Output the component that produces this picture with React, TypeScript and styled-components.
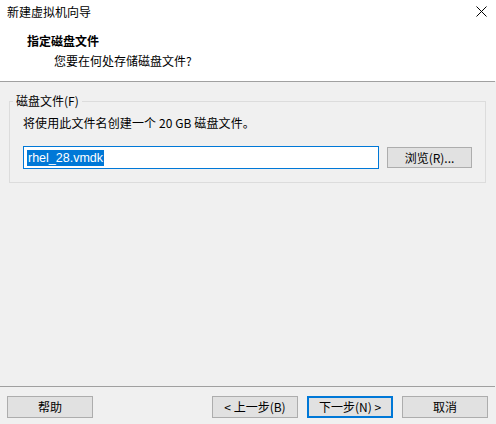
import React from 'react'
import styled, { createGlobalStyle } from 'styled-components'

const GlobalStyle = createGlobalStyle`
  html, body {
    margin: 0;
    padding: 0;
    background: #f0f0f0;
  }
  body {
    font-family: "Noto Sans CJK SC", "Microsoft YaHei UI", sans-serif;
    font-size: 12px;
    color: #000;
  }
`

const Window = styled.div`
  width: 496px;
  height: 424px;
  display: flex;
  flex-direction: column;
  background: #f0f0f0;
  overflow: hidden;
`

const Header = styled.div`
  height: 81px;
  background: #fff;
  display: flex;
  flex-direction: column;
`

const TitleBar = styled.div`
  height: 24px;
  display: flex;
  align-items: center;
  justify-content: space-between;
  padding: 0 9px 0 7px;
  font-size: 12px;
  line-height: 16px;
`

const CloseButton = styled.div`
  width: 12px;
  height: 12px;
  display: flex;
  align-items: center;
  justify-content: center;
  margin-top: -2px;
`

const Heading = styled.div`
  margin-top: 9px;
  padding-left: 27px;
  font-size: 12px;
  line-height: 16px;
  font-weight: 700;
`

const SubHeading = styled.div`
  margin-top: 4px;
  padding-left: 54px;
  font-size: 12px;
  line-height: 16px;
`

const Divider = styled.div`
  height: 1px;
  background: #a0a0a0;
  margin-right: 1px;
`

const Body = styled.div`
  flex: 1;
  padding: 11px 10px 0 9px;
`

const GroupBox = styled.fieldset`
  margin: 0;
  border: 1px solid #dcdcdc;
  padding: 0 3px 13px 3px;
`

const GroupLabel = styled.legend`
  padding: 0 3px;
  font-size: 12px;
  line-height: 16px;
`

const GroupContent = styled.div`
  margin-left: 10px;
`

const Hint = styled.div`
  margin-top: 6px;
  line-height: 16px;
  letter-spacing: 0.1px;
`

const FileRow = styled.div`
  margin-top: 15px;
  display: flex;
  align-items: center;
  gap: 8px;
`

const PathField = styled.div`
  width: 356px;
  height: 23px;
  box-sizing: border-box;
  border: 1px solid #0078d7;
  background: #fff;
  display: flex;
  align-items: center;
  padding-left: 3px;
`

const Selected = styled.span`
  background: #0078d7;
  color: #fff;
  font-family: "Liberation Sans", Arial, sans-serif;
  font-size: 12.5px;
  line-height: 16px;
  height: 16px;
  padding: 0 1px;
`

const Button = styled.button<{ $primary?: boolean }>`
  width: 86px;
  height: 22px;
  box-sizing: border-box;
  margin: 0;
  padding: 0;
  font-family: inherit;
  font-size: 12px;
  line-height: 16px;
  color: #000;
  background: #e1e1e1;
  border: ${({ $primary }) => ($primary ? '2px solid #0078d7' : '1px solid #adadad')};
  border-radius: 0;
`

const BrowseButton = styled(Button)`
  width: 85px;
  height: 21px;
`

const Footer = styled.div`
  display: flex;
  align-items: center;
  justify-content: space-between;
  padding: 9px 8px 6px 7px;
`

const NavGroup = styled.div`
  display: flex;
  gap: 9px;
`

const App: React.FC = () => {
  return (
    <Window>
      <GlobalStyle />
      <Header>
        <TitleBar>
          <span>新建虚拟机向导</span>
          <CloseButton>
            <svg width="11" height="11" viewBox="0 0 11 11">
              <path d="M0.5 0.5 L10.5 10.5 M10.5 0.5 L0.5 10.5" stroke="#000" strokeWidth="1" fill="none" />
            </svg>
          </CloseButton>
        </TitleBar>
        <Heading>指定磁盘文件</Heading>
        <SubHeading>您要在何处存储磁盘文件?</SubHeading>
      </Header>
      <Divider />
      <Body>
        <GroupBox>
          <GroupLabel>磁盘文件(F)</GroupLabel>
          <GroupContent>
            <Hint>将使用此文件名创建一个 20 GB 磁盘文件。</Hint>
            <FileRow>
              <PathField>
                <Selected>rhel_28.vmdk</Selected>
              </PathField>
              <BrowseButton>浏览(R)...</BrowseButton>
            </FileRow>
          </GroupContent>
        </GroupBox>
      </Body>
      <Divider />
      <Footer>
        <Button>帮助</Button>
        <NavGroup>
          <Button>&lt; 上一步(B)</Button>
          <Button $primary>下一步(N) &gt;</Button>
          <Button>取消</Button>
        </NavGroup>
      </Footer>
    </Window>
  )
}

export default App
